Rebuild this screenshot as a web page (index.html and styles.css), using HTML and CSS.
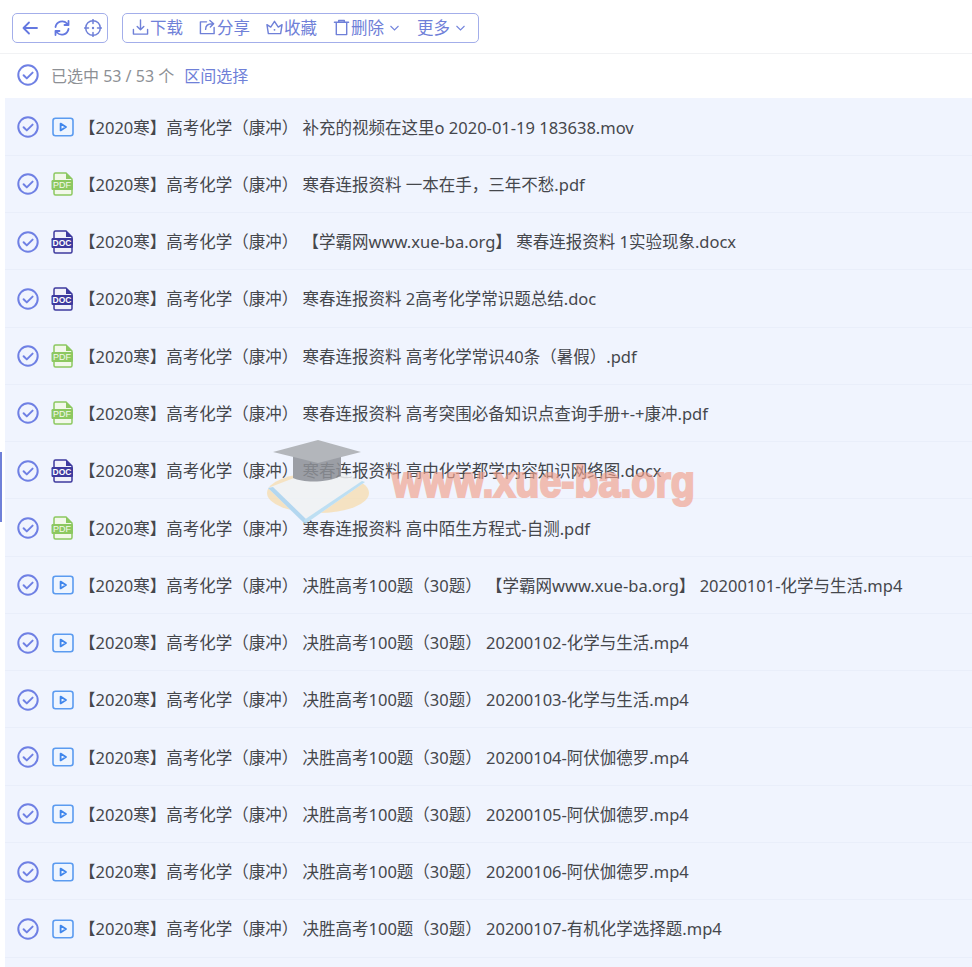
FILE: index.html
```html
<!DOCTYPE html>
<html lang="zh">
<head>
<meta charset="utf-8">
<title>文件列表</title>
<link rel="stylesheet" href="styles.css">
</head>
<body>
<svg class="defs" width="0" height="0" aria-hidden="true">
  <defs>
    <symbol id="check" viewBox="0 0 22 22">
      <circle cx="11" cy="11" r="9.700" fill="none" stroke="#6f80e4" stroke-width="2"/>
      <path d="M6.600 11.200l3.200 3.200 5.800-5.800" fill="none" stroke="#6f80e4" stroke-width="2" stroke-linecap="round" stroke-linejoin="round"/>
    </symbol>
    <symbol id="video" viewBox="0 0 22 20">
      <rect x="1" y="1.300" width="20" height="17.400" rx="2.500" fill="#eef5ff" stroke="#5b9bf0" stroke-width="1.600"/>
      <path d="M8.600 6.600l5.400 3.400-5.400 3.400z" fill="none" stroke="#3f86ec" stroke-width="1.800" stroke-linejoin="round"/>
    </symbol>
    <symbol id="pdf" viewBox="0 0 24 24">
      <path d="M3 8V2.500A1.500 1.500 0 0 1 4.500 1H15l6 6v14.500a1.500 1.500 0 0 1-1.500 1.500H4.500A1.500 1.500 0 0 1 3 21.500V18" fill="#f2f8ea" stroke="#8cc860" stroke-width="1.500"/>
      <path d="M15 1v6h6z" fill="#8cc860"/>
      <rect x="0.500" y="8" width="21.500" height="10" rx="1.200" fill="#8cc860"/>
    </symbol>
    <symbol id="doc" viewBox="0 0 24 24">
      <path d="M3 8V2.500A1.500 1.500 0 0 1 4.500 1H15l6 6v14.500a1.500 1.500 0 0 1-1.500 1.500H4.500A1.500 1.500 0 0 1 3 21.500V18" fill="#f1f1fa" stroke="#3e3a9e" stroke-width="1.500"/>
      <path d="M15 1v6h6z" fill="#3e3a9e"/>
      <rect x="0.500" y="8" width="21.500" height="10" rx="1.200" fill="#3e3a9e"/>
    </symbol>
  </defs>
</svg>

<header class="toolbar">
  <div class="group group-nav">
    <button class="tool" aria-label="返回">
      <svg class="ico" viewBox="0 0 18 18"><path d="M16 9H2.500M8 3.500L2.500 9 8 14.500" /></svg>
    </button>
    <button class="tool" aria-label="刷新">
      <svg class="ico" viewBox="0 0 18 18"><path d="M2.500 8a6.700 6.700 0 0 1 11.500-3.500L15.500 6M15.500 2v4h-4M15.500 10a6.700 6.700 0 0 1-11.500 3.500L2.500 12M2.500 16v-4h4"/></svg>
    </button>
    <button class="tool" aria-label="定位">
      <svg class="ico ico-thin" viewBox="0 0 18 18"><circle cx="9" cy="9" r="7.300"/><path d="M9 0.500v4M9 13.500v4M0.500 9h4M13.500 9h4"/><circle class="dot" cx="9" cy="9" r="1.200"/></svg>
    </button>
  </div>
  <div class="group group-act">
    <button class="act">
      <svg class="ico ico-thin" viewBox="0 0 18 18"><path d="M9 1v10.500M5.500 8L9 11.500 12.500 8M1.500 11v5h15v-5"/></svg>下载
    </button>
    <button class="act">
      <svg class="ico ico-thin" viewBox="0 0 18 18"><path d="M8 3H1.500v12.500h14.500V9M7 11c0-4 3-6 7-6M11.500 1.500L15.500 5l-3.500 3.500"/></svg>分享
    </button>
    <button class="act">
      <svg class="ico ico-thin" viewBox="0 0 18 18"><path d="M1 6l4 2.500L9 2.500l4 6 4-2.500-1.500 9.500h-13z"/><circle class="dot" cx="9" cy="11.500" r="1"/></svg>收藏
    </button>
    <button class="act act-del">
      <svg class="ico ico-thin" viewBox="0 0 18 18"><path d="M1.500 3.500h15M6 3.500V1.500h6v2M3.500 3.500V16.500h11V3.500"/></svg>删除<svg class="chev" viewBox="0 0 10 6"><path d="M1 1l4 4 4-4"/></svg>
    </button>
    <button class="act act-more">更多<svg class="chev" viewBox="0 0 10 6"><path d="M1 1l4 4 4-4"/></svg></button>
  </div>
</header>

<div class="status">
  <svg class="check"><use href="#check"/></svg>
  <span class="count">已选中 53 / 53 个</span>
  <a class="range">区间选择</a>
</div>

<ul class="list">
  <li class="row"><svg class="check"><use href="#check"/></svg><span class="ft ft-video"><svg class="ftv"><use href="#video"/></svg></span><span class="name">【2020寒】高考化学（康冲） 补充的视频在这里o 2020-01-19 183638.mov</span></li>
  <li class="row"><svg class="check"><use href="#check"/></svg><span class="ft ft-pdf"><svg class="ftd"><use href="#pdf"/></svg><b>PDF</b></span><span class="name">【2020寒】高考化学（康冲） 寒春连报资料 一本在手，三年不愁.pdf</span></li>
  <li class="row"><svg class="check"><use href="#check"/></svg><span class="ft ft-doc"><svg class="ftd"><use href="#doc"/></svg><b>DOC</b></span><span class="name">【2020寒】高考化学（康冲） 【学霸网www.xue-ba.org】 寒春连报资料 1实验现象.docx</span></li>
  <li class="row"><svg class="check"><use href="#check"/></svg><span class="ft ft-doc"><svg class="ftd"><use href="#doc"/></svg><b>DOC</b></span><span class="name">【2020寒】高考化学（康冲） 寒春连报资料 2高考化学常识题总结.doc</span></li>
  <li class="row"><svg class="check"><use href="#check"/></svg><span class="ft ft-pdf"><svg class="ftd"><use href="#pdf"/></svg><b>PDF</b></span><span class="name">【2020寒】高考化学（康冲） 寒春连报资料 高考化学常识40条（暑假）.pdf</span></li>
  <li class="row"><svg class="check"><use href="#check"/></svg><span class="ft ft-pdf"><svg class="ftd"><use href="#pdf"/></svg><b>PDF</b></span><span class="name">【2020寒】高考化学（康冲） 寒春连报资料 高考突围必备知识点查询手册+-+康冲.pdf</span></li>
  <li class="row"><svg class="check"><use href="#check"/></svg><span class="ft ft-doc"><svg class="ftd"><use href="#doc"/></svg><b>DOC</b></span><span class="name">【2020寒】高考化学（康冲） 寒春连报资料 高中化学都学内容知识网络图.docx</span></li>
  <li class="row"><svg class="check"><use href="#check"/></svg><span class="ft ft-pdf"><svg class="ftd"><use href="#pdf"/></svg><b>PDF</b></span><span class="name">【2020寒】高考化学（康冲） 寒春连报资料 高中陌生方程式-自测.pdf</span></li>
  <li class="row"><svg class="check"><use href="#check"/></svg><span class="ft ft-video"><svg class="ftv"><use href="#video"/></svg></span><span class="name">【2020寒】高考化学（康冲） 决胜高考100题（30题） 【学霸网www.xue-ba.org】 20200101-化学与生活.mp4</span></li>
  <li class="row"><svg class="check"><use href="#check"/></svg><span class="ft ft-video"><svg class="ftv"><use href="#video"/></svg></span><span class="name">【2020寒】高考化学（康冲） 决胜高考100题（30题） 20200102-化学与生活.mp4</span></li>
  <li class="row"><svg class="check"><use href="#check"/></svg><span class="ft ft-video"><svg class="ftv"><use href="#video"/></svg></span><span class="name">【2020寒】高考化学（康冲） 决胜高考100题（30题） 20200103-化学与生活.mp4</span></li>
  <li class="row"><svg class="check"><use href="#check"/></svg><span class="ft ft-video"><svg class="ftv"><use href="#video"/></svg></span><span class="name">【2020寒】高考化学（康冲） 决胜高考100题（30题） 20200104-阿伏伽德罗.mp4</span></li>
  <li class="row"><svg class="check"><use href="#check"/></svg><span class="ft ft-video"><svg class="ftv"><use href="#video"/></svg></span><span class="name">【2020寒】高考化学（康冲） 决胜高考100题（30题） 20200105-阿伏伽德罗.mp4</span></li>
  <li class="row"><svg class="check"><use href="#check"/></svg><span class="ft ft-video"><svg class="ftv"><use href="#video"/></svg></span><span class="name">【2020寒】高考化学（康冲） 决胜高考100题（30题） 20200106-阿伏伽德罗.mp4</span></li>
  <li class="row"><svg class="check"><use href="#check"/></svg><span class="ft ft-video"><svg class="ftv"><use href="#video"/></svg></span><span class="name">【2020寒】高考化学（康冲） 决胜高考100题（30题） 20200107-有机化学选择题.mp4</span></li>
  <li class="row"></li>
</ul>

<div class="side-mark"></div>

<div class="watermark" aria-hidden="true">
  <svg class="wm-logo" viewBox="0 0 106 90">
    <ellipse cx="52" cy="55" rx="51" ry="20" fill="#f8d9a0" opacity=".75"/>
    <path d="M2 50l37 36 60-42-40-16z" fill="#f0f2f3"/>
    <path d="M2 50l37 36 1-5-33-32z" fill="#a9d2ee"/>
    <path d="M99 44L39 86l-1-4 58-39z" fill="#b5dcf2"/>
    <path d="M27 14v26c10 5 34 5 48-2V14z" fill="#8d9096"/>
    <path d="M7 14L52 2l43 12-43 11z" fill="#a9acb0"/>
  </svg>
  <span class="wm-text">www.xue-ba.org</span>
</div>
</body>
</html>
```
FILE: styles.css
```css
* { box-sizing: border-box; }
html, body { margin: 0; padding: 0; }
body {
  position: relative;
  width: 972px;
  height: 967px;
  overflow: hidden;
  background: #fff;
  font-family: "Noto Sans", "Noto Sans CJK SC", sans-serif;
  font-size: 16.500px;
  color: #45474c;
}
.defs { position: absolute; }

.toolbar {
  display: flex;
  align-items: center;
  gap: 14px;
  height: 54px;
  padding: 2px 0 0 12px;
  border-bottom: 1px solid #f1f2f4;
}
.group {
  display: flex;
  align-items: center;
  height: 30px;
  border: 1px solid #a3aeea;
  border-radius: 5px;
}
.group-nav { width: 96px; padding: 0 5px 0 8px; justify-content: space-between; }
.group-act { width: 357px; padding: 0 0 0 9px; }
.tool, .act {
  display: flex;
  align-items: center;
  border: 0;
  padding: 0;
  background: none;
  color: #6f80d8;
  font: inherit;
}
.act { width: 67px; line-height: 20px; }
.act .ico { width: 17px; height: 17px; margin-right: 1px; }
.act-del { width: 84px; }
.act-more { width: auto; }
.ico {
  width: 18px;
  height: 18px;
  fill: none;
  stroke: #6478e0;
  stroke-width: 1.800;
  stroke-linecap: round;
  stroke-linejoin: round;
}
.ico-thin { stroke-width: 1.500; stroke: #6f80d8; }
.dot { fill: #6f80d8; stroke: none; }
.chev {
  width: 11px;
  height: 6px;
  margin-left: 5px;
  fill: none;
  stroke: #7384dc;
  stroke-width: 1.100;
}

.status {
  display: flex;
  align-items: center;
  height: 44.400px;
  padding: 0 0 3px 17px;
  font-size: 16px;
}
.check { width: 22px; height: 22px; flex: none; }
.count { margin-left: 12px; color: #8d9095; }
.range { margin-left: 10px; color: #6f80d8; }

.list {
  list-style: none;
  margin: 0 0 0 5px;
  padding: 0;
  background: #f0f4fe;
}
.row {
  display: flex;
  align-items: center;
  height: 57.290px;
  padding-left: 12px;
  border-bottom: 1px solid #e9eefa;
}
.row .check { margin-top: 1px; }
.ft {
  position: relative;
  flex: none;
  width: 24px;
  height: 24px;
  margin: 1px 0 0 12px;
  display: flex;
  align-items: center;
  justify-content: center;
}
.ftv { width: 22px; height: 20px; }
.ftd { width: 24px; height: 24px; }
.ft b {
  position: absolute;
  left: 0;
  top: 8px;
  width: 22px;
  text-align: center;
  font-family: "Liberation Sans", sans-serif;
  font-size: 9px;
  line-height: 10px;
  font-weight: 400;
  color: #f4f9ee;
}
.ft-doc b { font-weight: 700; color: #fff; font-size: 8.500px; }
.name {
  margin-left: 4px;
  white-space: nowrap;
}

.side-mark {
  position: absolute;
  left: 0;
  top: 452px;
  width: 2px;
  height: 70px;
  background: #6f80d8;
}

.watermark {
  position: absolute;
  left: 266px;
  top: 438px;
  width: 440px;
  height: 90px;
  pointer-events: none;
}
.wm-logo {
  position: absolute;
  left: 0;
  top: 0;
  width: 106px;
  height: 90px;
  opacity: .85;
}
.wm-text {
  position: absolute;
  left: 126px;
  top: 18px;
  font-family: "Liberation Sans", sans-serif;
  font-weight: 700;
  font-size: 40px;
  line-height: 50px;
  color: #f0a08c;
  -webkit-text-stroke: 2px #f0a08c;
  opacity: .65;
  white-space: nowrap;
  transform: scale(.985, 1.120);
  transform-origin: left center;
}
```
